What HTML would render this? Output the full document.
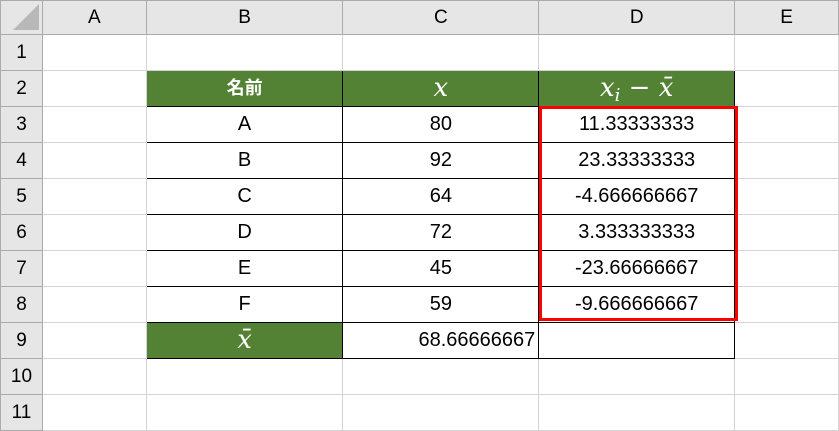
<!DOCTYPE html>
<html><head><meta charset="utf-8"><style>
html,body{margin:0;padding:0;background:#fff;width:839px;height:430px;overflow:hidden}
table{border-collapse:collapse;table-layout:fixed;position:absolute;left:0;top:0;font-family:"Liberation Sans","Noto Sans CJK JP",sans-serif;font-size:20px;color:#000}
td{border:1px solid #d4d4d4;height:35px;padding:0;text-align:center;white-space:nowrap;overflow:hidden}
td>div{height:35px;line-height:35px;overflow:hidden}
tr.h td{height:33px;background:#e6e6e6;border-color:#ababab;font-size:19px}
td.r{background:#e6e6e6;border-color:#ababab;font-size:19px}
td.b{border:1px solid #000}
td.g{background:#548235;color:#fff;border:1px solid #000}
td.m{font-family:"DejaVu Serif","Liberation Serif",serif;font-style:italic;font-size:26px}
td.m sub{font-size:18px;line-height:0;vertical-align:-5px}
.box{position:absolute;left:539px;top:106px;width:193px;height:209px;border:3px solid #f00}
</style></head><body>
<table>
<colgroup><col style="width:42px"><col style="width:104px"><col style="width:197px"><col style="width:196px"><col style="width:196px"><col style="width:104px"></colgroup>
<tr class="h"><td style="position:relative"><svg width="40" height="32" style="position:absolute;left:0;top:0"><polygon points="12,29 38,29 38,3" fill="#b8b8b8"/></svg></td><td>A</td><td>B</td><td>C</td><td>D</td><td>E</td></tr>
<tr><td class="r">1</td><td></td><td></td><td></td><td></td><td></td></tr>
<tr><td class="r">2</td><td></td><td class="g" style="font-weight:bold;font-size:18px"><div>名前</div></td><td class="g m"><div>x</div></td><td class="g m"><div>x<sub>i</sub> − x̄</div></td><td></td></tr>
<tr><td class="r">3</td><td></td><td class="b">A</td><td class="b">80</td><td class="b">11.33333333</td><td></td></tr>
<tr><td class="r">4</td><td></td><td class="b">B</td><td class="b">92</td><td class="b">23.33333333</td><td></td></tr>
<tr><td class="r">5</td><td></td><td class="b">C</td><td class="b">64</td><td class="b">-4.666666667</td><td></td></tr>
<tr><td class="r">6</td><td></td><td class="b">D</td><td class="b">72</td><td class="b">3.333333333</td><td></td></tr>
<tr><td class="r">7</td><td></td><td class="b">E</td><td class="b">45</td><td class="b">-23.66666667</td><td></td></tr>
<tr><td class="r">8</td><td></td><td class="b">F</td><td class="b">59</td><td class="b">-9.666666667</td><td></td></tr>
<tr><td class="r">9</td><td></td><td class="g m"><div>x̄</div></td><td class="b" style="text-align:right;padding-right:3px">68.66666667</td><td class="b"></td><td></td></tr>
<tr><td class="r">10</td><td></td><td></td><td></td><td></td><td></td></tr>
<tr><td class="r">11</td><td></td><td></td><td></td><td></td><td></td></tr>
</table>
<div class="box"></div>
</body></html>
